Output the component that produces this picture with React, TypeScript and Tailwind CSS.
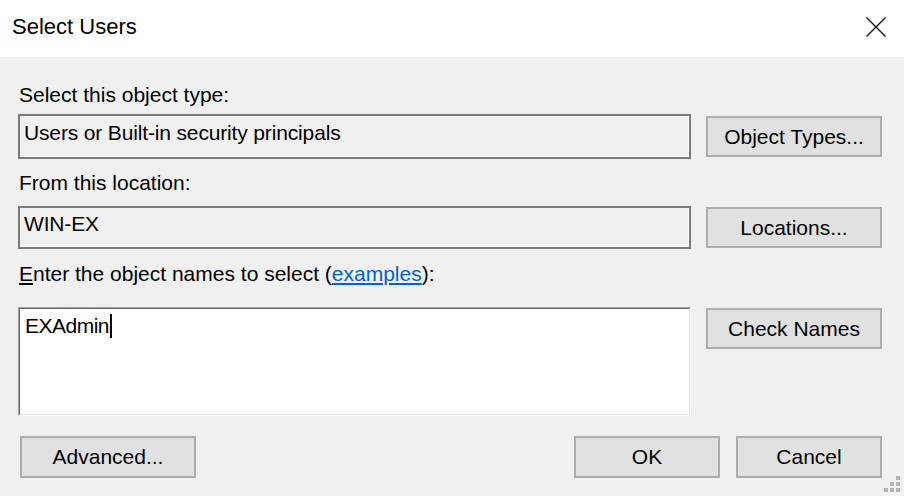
import React from 'react';

const font = { fontFamily: '"Liberation Sans", Arial, sans-serif' };

const WinButton = ({ label, className = '' }: { label: string; className?: string }) => (
  <button
    type="button"
    className={`flex items-center justify-center border-2 border-[#adadad] bg-[#e1e1e1] text-[21px] leading-[24px] text-black ${className}`}
  >
    {label}
  </button>
);

const ReadOnlyField = ({ value, className = '' }: { value: string; className?: string }) => (
  <div
    className={`border-2 border-[#7a7a7a] bg-[#f0f0f0] pl-[4px] text-[21px] leading-[24px] tracking-[-0.15px] text-black shadow-[inset_-1px_-1px_0_#ffffff] ${className}`}
  >
    {value}
  </div>
);

const App = () => {
  return (
    <div className="relative h-[496px] w-[904px] overflow-hidden bg-[#f0f0f0] text-black" style={font}>
      {/* Title bar */}
      <div className="flex h-[57px] items-center justify-between bg-white pl-[12px] pr-[18px]">
        <span className="pb-[3px] text-[22px] leading-[24px]">Select Users</span>
        <svg width="20" height="20" viewBox="0 0 20 20" className="mb-[4px]">
          <path d="M0.5 0.5 L19.5 19.5 M19.5 0.5 L0.5 19.5" stroke="#111" strokeWidth="1.3" fill="none" />
        </svg>
      </div>

      {/* Body */}
      <div className="pl-[18px] pr-[22px] pt-[26px]">
        <div className="pl-[1px] text-[21px] leading-[24px]">Select this object type:</div>

        <div className="mt-[7px] grid grid-cols-[673px_176px] items-center gap-x-[15px]">
          <ReadOnlyField value="Users or Built-in security principals" className="h-[45px] pt-[5px]" />
          <WinButton label="Object Types..." className="h-[41px]" />
        </div>

        <div className="mt-[12px] pl-[1px] text-[21px] leading-[24px]">From this location:</div>

        <div className="mt-[11px] grid grid-cols-[673px_176px] items-center gap-x-[15px]">
          <ReadOnlyField value="WIN-EX" className="h-[43px] pt-[4px]" />
          <WinButton label="Locations..." className="h-[41px]" />
        </div>

        <div className="mt-[13px] pl-[1px] text-[21px] leading-[24px]">
          <span className="underline underline-offset-[2px]">E</span>nter the object names to select (
          <span className="text-[#0066cc] underline underline-offset-[2px]">examples</span>):
        </div>

        <div className="mt-[21px] grid grid-cols-[673px_176px] items-start gap-x-[15px]">
          <div className="h-[109px] border-l border-t border-b border-r border-l-[#a0a0a0] border-t-[#a0a0a0] border-b-white border-r-white">
            <div className="h-full border border-l-[#696969] border-t-[#696969] border-b-[#e3e3e3] border-r-[#e3e3e3] bg-white pl-[5px] pt-[5px]">
              <div className="flex items-center text-[21px] leading-[24px]">
                <span className="tracking-[-0.5px]">EXAdmin</span>
                <span className="ml-[1px] inline-block h-[24px] w-[2px] bg-black" />
              </div>
            </div>
          </div>
          <WinButton label="Check Names" className="mt-[1px] h-[41px]" />
        </div>

        <div className="mt-[20px] flex items-center">
          <WinButton label="Advanced..." className="ml-[2px] h-[42px] w-[176px]" />
          <div className="ml-auto flex gap-x-[16px]">
            <WinButton label="OK" className="h-[42px] w-[146px]" />
            <WinButton label="Cancel" className="h-[42px] w-[146px]" />
          </div>
        </div>
      </div>

      {/* Size grip */}
      <div className="absolute bottom-[4px] right-[4px] grid grid-cols-[4px_4px_4px] grid-rows-[4px_4px_4px] gap-[2px]">
        <span />
        <span />
        <span className="bg-[#b4b4b4]" />
        <span />
        <span className="bg-[#b4b4b4]" />
        <span className="bg-[#b4b4b4]" />
        <span className="bg-[#b4b4b4]" />
        <span className="bg-[#b4b4b4]" />
        <span className="bg-[#b4b4b4]" />
      </div>
    </div>
  );
};

export default App;
